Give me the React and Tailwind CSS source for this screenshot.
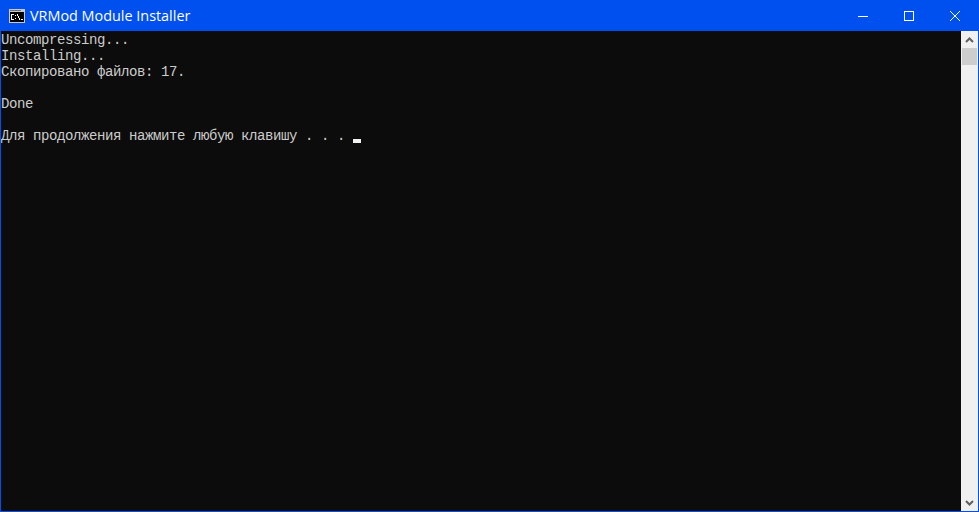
const lines = [
  'Uncompressing...',
  'Installing...',
  'Скопировано файлов: 17.',
  '',
  'Done',
  '',
  'Для продолжения нажмите любую клавишу . . . ',
]

function ConsoleIcon() {
  return (
    <svg width="16" height="14" viewBox="0 0 16 14" className="block" shapeRendering="crispEdges">
      <rect x="0" y="0" width="16" height="14" fill="#c8c8c8" />
      <rect x="1" y="3" width="14" height="10" fill="#000" />
      <rect x="1" y="1" width="11" height="1" fill="#6f6f6f" />
      <path d="M2 5h3v1H3v4h2v1H2zM6 6h1v1H6zM6 9h1v1H6zM8 5h1v2h1v2h1v2h-1V9H9V7H8zM12 10h2v1h-2z" fill="#fff" />
    </svg>
  )
}

function TitleBar() {
  return (
    <div className="flex h-[30px] shrink-0 items-center bg-[#0050ef] text-white">
      <div className="ml-[8px] mr-[5px]">
        <ConsoleIcon />
      </div>
      <span className="font-['Open_Sans',sans-serif] text-[14.4px] leading-none">VRMod Module Installer</span>
      <div className="ml-auto flex h-full">
        <button className="flex w-[46px] items-center justify-center">
          <svg width="10" height="10" viewBox="0 0 10 10">
            <path d="M0 5.5h10" stroke="#fff" strokeWidth="1" />
          </svg>
        </button>
        <button className="flex w-[46px] items-center justify-center">
          <svg width="10" height="10" viewBox="0 0 10 10">
            <rect x="0.5" y="0.5" width="9" height="9" fill="none" stroke="#fff" strokeWidth="1" />
          </svg>
        </button>
        <button className="flex w-[46px] items-center justify-center">
          <svg width="10" height="10" viewBox="0 0 10 10">
            <path d="M0 0l10 10M10 0L0 10" stroke="#fff" strokeWidth="1" />
          </svg>
        </button>
      </div>
    </div>
  )
}

function ScrollBar() {
  return (
    <div className="flex w-[17px] shrink-0 flex-col bg-[#f0f0f0]">
      <div className="flex h-[17px] items-center justify-center">
        <svg width="9" height="6" viewBox="0 0 9 6">
          <path d="M1 5l3.5-3.5L8 5" stroke="#606060" strokeWidth="2" fill="none" />
        </svg>
      </div>
      <div className="mx-px h-[17px] bg-[#cdcdcd]" />
      <div className="mt-auto flex h-[17px] items-center justify-center">
        <svg width="9" height="6" viewBox="0 0 9 6">
          <path d="M1 1l3.5 3.5L8 1" stroke="#606060" strokeWidth="2" fill="none" />
        </svg>
      </div>
    </div>
  )
}

export default function App() {
  return (
    <div className="flex h-[512px] w-[979px] flex-col overflow-hidden border border-[#0050ef] bg-[#0c0c0c]">
      <TitleBar />
      <div className="flex min-h-0 flex-1">
        <div className="min-w-0 flex-1 font-['Liberation_Mono',monospace] text-[14px] leading-[18px] tracking-[-0.4px] text-[#cccccc]">
          {lines.map((line, i) => (
            <div key={i} className="h-[16px] whitespace-pre">
              {line}
              {i === lines.length - 1 && (
                <span className="relative inline-block h-[16px] w-[8px] align-top">
                  <span className="absolute inset-x-0 bottom-0 h-[4px] bg-[#f2f2f2]" />
                </span>
              )}
            </div>
          ))}
        </div>
        <ScrollBar />
      </div>
    </div>
  )
}
